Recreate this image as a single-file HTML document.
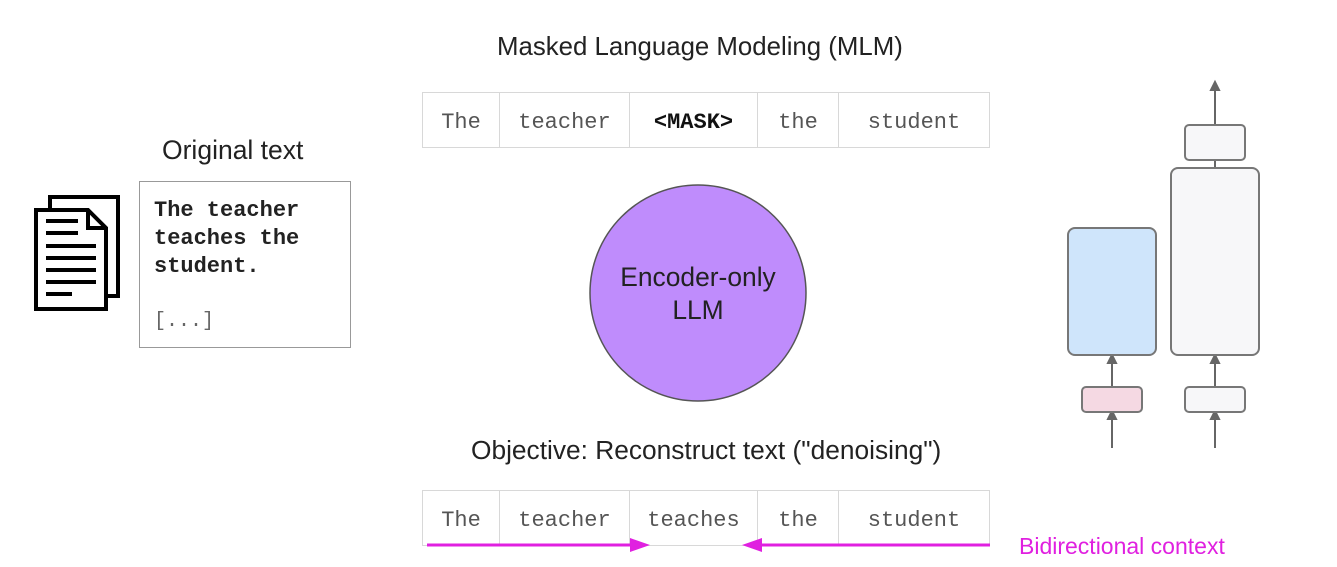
<!DOCTYPE html>
<html><head><style>
body{margin:0;width:1337px;height:567px;background:#fff;position:relative;overflow:hidden;font-family:"Liberation Sans",sans-serif}
.t{position:absolute;color:#222;font-size:26px;white-space:nowrap}
.row{position:absolute;left:422px;display:flex;border:1px solid #d8d8d8;height:56px;box-sizing:border-box}
.row div{border-right:1px solid #d8d8d8;display:flex;align-items:center;justify-content:center;font-family:"Liberation Mono",monospace;font-size:22px;color:#555;padding-top:4px;box-sizing:border-box}
.row div:last-child{border-right:none}
</style></head><body>
<div class="t" style="left:497px;top:33px;font-size:25.8px">Masked Language Modeling (MLM)</div>
<div class="t" style="left:162px;top:135px;font-size:26.5px">Original text</div>
<div class="t" style="left:471px;top:435px;font-size:26.3px">Objective: Reconstruct text ("denoising")</div>
<div class="t" style="left:1019px;top:533px;color:#e020e0;font-size:23px">Bidirectional context</div>

<div class="row" style="top:92px">
<div style="width:77px">The</div><div style="width:130px">teacher</div><div style="width:128px;font-weight:bold;color:#111">&lt;MASK&gt;</div><div style="width:81px">the</div><div style="width:150px">student</div></div>
<div class="row" style="top:490px">
<div style="width:77px">The</div><div style="width:130px">teacher</div><div style="width:128px">teaches</div><div style="width:81px">the</div><div style="width:150px">student</div></div>

<div style="position:absolute;left:139px;top:181px;width:212px;height:167px;border:1px solid #999;box-sizing:border-box;font-family:'Liberation Mono',monospace;font-size:22px;font-weight:bold;color:#222;line-height:28px;padding:15px 0 0 14px">The teacher<br>teaches the<br>student.<div style="font-weight:normal;color:#666;margin-top:27px;font-size:20px">[...]</div></div>

<svg width="1337" height="567" style="position:absolute;left:0;top:0">
<g fill="none" stroke="#000" stroke-width="4">
<path d="M50 208 V197 H118 V296 H106"/>
<path d="M36 210 H88 L106 228 V309 H36 Z"/>
<path d="M88 210 V228 H106"/>
</g>
<g stroke="#000" stroke-width="4">
<line x1="46" y1="221" x2="78" y2="221"/><line x1="46" y1="233" x2="78" y2="233"/>
<line x1="46" y1="246" x2="96" y2="246"/><line x1="46" y1="258" x2="96" y2="258"/>
<line x1="46" y1="270" x2="96" y2="270"/><line x1="46" y1="282" x2="96" y2="282"/>
<line x1="46" y1="294" x2="72" y2="294"/></g>
<circle cx="698" cy="293" r="108" fill="#bf8cfc" stroke="#555" stroke-width="1.5"/>
<text x="698" y="286" text-anchor="middle" font-family="Liberation Sans" font-size="26.4" fill="#222">Encoder-only</text>
<text x="698" y="319" text-anchor="middle" font-family="Liberation Sans" font-size="26.4" fill="#222">LLM</text>
<g stroke="#e020e0" stroke-width="3" fill="#e020e0">
<line x1="427" y1="545" x2="632" y2="545"/><path d="M650 545 L630 538 L630 552Z" stroke="none"/>
<line x1="760" y1="545" x2="990" y2="545"/><path d="M742 545 L762 538 L762 552Z" stroke="none"/>
</g>
<g stroke="#666" stroke-width="2" fill="#666">
<line x1="1112" y1="448" x2="1112" y2="415"/><path d="M1112 411 L1108 419 H1116Z"/>
<line x1="1215" y1="448" x2="1215" y2="415"/><path d="M1215 411 L1211 419 H1219Z"/>
<line x1="1112" y1="386" x2="1112" y2="359"/><path d="M1112 355 L1108 363 H1116Z"/>
<line x1="1215" y1="386" x2="1215" y2="359"/><path d="M1215 355 L1211 363 H1219Z"/>
<line x1="1215" y1="167" x2="1215" y2="160"/>
<line x1="1215" y1="125" x2="1215" y2="88"/><path d="M1215 82 L1211 90 H1219Z"/>
</g>
<g stroke="#777" stroke-width="2">
<rect x="1068" y="228" width="88" height="127" rx="7" fill="#cfe5fb"/>
<rect x="1171" y="168" width="88" height="187" rx="7" fill="#f7f7f9"/>
<rect x="1185" y="125" width="60" height="35" rx="4" fill="#f7f7f9"/>
<rect x="1082" y="387" width="60" height="25" rx="4" fill="#f5d9e3"/>
<rect x="1185" y="387" width="60" height="25" rx="4" fill="#f7f7f9"/>
</g>
</svg>
</body></html>
